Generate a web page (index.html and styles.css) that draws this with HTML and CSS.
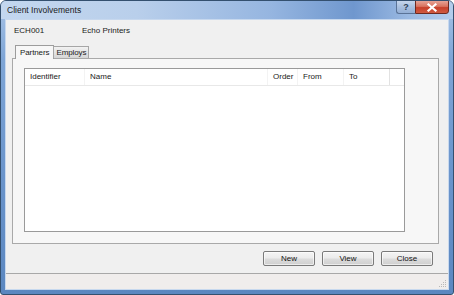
FILE: index.html
```html
<!DOCTYPE html>
<html>
<head>
<meta charset="utf-8">
<link rel="stylesheet" href="styles.css">
</head>
<body>
<div class="window">
  <div class="titlebar">
    <span class="title">Client Involvements</span>
    <div class="caption">
      <div class="cbtn help">?</div>
      <div class="cbtn close">
        <svg width="12" height="9" viewBox="0 0 12 9"><path d="M2.5 1.5 L9.5 7.5 M9.5 1.5 L2.5 7.5" stroke="#fff" stroke-width="2.2" stroke-linecap="square"/></svg>
      </div>
    </div>
  </div>
  <div class="client">
    <div class="info">
      <span class="code">ECH001</span>
      <span class="cname">Echo Printers</span>
    </div>
    <div class="tabs">
      <div class="tab active">Partners</div>
      <div class="tab">Employs</div>
    </div>
    <div class="panel">
      <div class="list">
        <div class="lhead">
          <div class="col c1">Identifier</div>
          <div class="col c2">Name</div>
          <div class="col c3">Order</div>
          <div class="col c4">From</div>
          <div class="col c5">To</div>
        </div>
        <div class="lbody"></div>
      </div>
    </div>
    <div class="buttons">
      <div class="btn">New</div>
      <div class="btn">View</div>
      <div class="btn">Close</div>
    </div>
    <div class="status">
      <div class="grip">
        <svg width="9" height="9" viewBox="0 0 9 9">
          <rect x="7" y="1" width="1" height="1" fill="#b8b8b8"/>
          <rect x="5" y="3" width="1" height="1" fill="#b8b8b8"/>
          <rect x="7" y="3" width="1" height="1" fill="#b8b8b8"/>
          <rect x="3" y="5" width="1" height="1" fill="#b8b8b8"/>
          <rect x="5" y="5" width="1" height="1" fill="#b8b8b8"/>
          <rect x="7" y="5" width="1" height="1" fill="#b8b8b8"/>
          <rect x="1" y="7" width="1" height="1" fill="#b8b8b8"/>
          <rect x="3" y="7" width="1" height="1" fill="#b8b8b8"/>
          <rect x="5" y="7" width="1" height="1" fill="#b8b8b8"/>
          <rect x="7" y="7" width="1" height="1" fill="#b8b8b8"/>
        </svg>
      </div>
    </div>
  </div>
</div>
</body>
</html>
```

FILE: styles.css
```css
* { box-sizing: border-box; }
html, body { margin: 0; padding: 0; background: #ffffff; }
body {
  font-family: "Liberation Sans", Arial, sans-serif;
  font-size: 8px;
  color: #1a1a1a;
}
.window {
  width: 454px;
  height: 295px;
  border: 1px solid #34506f;
  border-radius: 6px 6px 3px 3px;
  background: linear-gradient(180deg, #a9c4e6 0%, #7ea5d6 20%, #6a94cb 60%, #5b87c0 100%);
  padding: 0 4px 4px 4px;
  display: flex;
  flex-direction: column;
  overflow: hidden;
}
.titlebar {
  height: 18px;
  display: flex;
  align-items: flex-start;
  margin: 0 -4px;
  padding: 0 0 0 5px;
  background: linear-gradient(90deg, #c3d7ef 0%, #b9cfeb 30%, #95b5e0 60%, #6f97ce 78%, #9ab9e2 90%, #b4cdec 100%);
}
.title {
  font-size: 8.5px;
  color: #1b1b1b;
  line-height: 18px;
  padding-left: 1px;
}
.caption {
  margin-left: auto;
  margin-right: 4px;
  display: flex;
  margin-top: -1px;
}
.cbtn {
  height: 14px;
  display: flex;
  align-items: center;
  justify-content: center;
}
.help {
  width: 19px;
  border: 1px solid #5a7397;
  border-right: none;
  border-radius: 0 0 0 3px;
  background: linear-gradient(180deg, #c6d6ec 0%, #a9c0df 50%, #93afd6 100%);
  color: #2d3f58;
  font-weight: bold;
  font-size: 9px;
}
.close {
  width: 34px;
  border: 1px solid #6e2a20;
  border-radius: 0 0 3px 0;
  background: linear-gradient(180deg, #e6a396 0%, #d9735f 45%, #c7402b 55%, #cf5a40 100%);
}
.client {
  flex: 1;
  border: 1px solid #c7d8ee;
  background: #f0f0f0;
  display: flex;
  flex-direction: column;
}
.info {
  margin-top: 5px;
  height: 12px;
  line-height: 12px;
  display: flex;
  padding-left: 8px;
}
.code { width: 68px; }
.tabs {
  margin-top: 8px;
  height: 13px;
  display: flex;
  align-items: flex-end;
  padding-left: 9px;
  position: relative;
  z-index: 1;
}
.tab {
  height: 12px;
  line-height: 11px;
  padding: 0 2px;
  border: 1px solid #a6a6a6;
  border-bottom: none;
  background: linear-gradient(180deg, #f2f2f2 0%, #e3e3e3 50%, #d6d6d6 100%);
  white-space: nowrap;
  letter-spacing: -0.1px;
}
.tab.active {
  height: 14px;
  line-height: 13px;
  padding: 0 4px;
  margin-bottom: -1px;
  background: #f7f7f7;
  border-color: #9c9c9c;
  margin-right: -1px;
}
.panel {
  flex: 1;
  margin: 0 9px 0 6px;
  border: 1px solid #a9a9a9;
  background: #f7f7f7;
  padding: 9px 33px 11px 11px;
  display: flex;
}
.list {
  flex: 1;
  border: 1px solid #9a9a9a;
  background: #ffffff;
  display: flex;
  flex-direction: column;
}
.lhead {
  height: 17px;
  border-bottom: 1px solid #e8e8e8;
  display: flex;
  line-height: 16px;
}
.col {
  padding-left: 5px;
  border-right: 1px solid #f3f3f3;
  white-space: nowrap;
}
.c1 { width: 60px; }
.c2 { width: 183px; }
.c3 { width: 30px; }
.c4 { width: 46px; }
.c5 { width: 46px; border-right-color: #e2e2e2; }
.lbody { flex: 1; }
.buttons {
  margin-top: 7px;
  height: 15px;
  display: flex;
  justify-content: flex-end;
  gap: 7px;
  padding-right: 15px;
}
.btn {
  width: 52px;
  height: 15px;
  border: 1px solid #7a7a7a;
  border-radius: 2px;
  background: linear-gradient(180deg, #f4f4f4 0%, #ebebeb 48%, #dcdcdc 52%, #cfcfcf 100%);
  box-shadow: inset 0 0 0 1px rgba(255,255,255,0.6);
  text-align: center;
  line-height: 13px;
  color: #111;
}
.status {
  margin-top: 7px;
  height: 16px;
  border-top: 1px solid #a8a8a8;
  background: #f0edec;
  display: flex;
  justify-content: flex-end;
  align-items: flex-end;
}
.grip { width: 9px; height: 9px; margin: 0 1px 1px 0; display: flex; }
```
